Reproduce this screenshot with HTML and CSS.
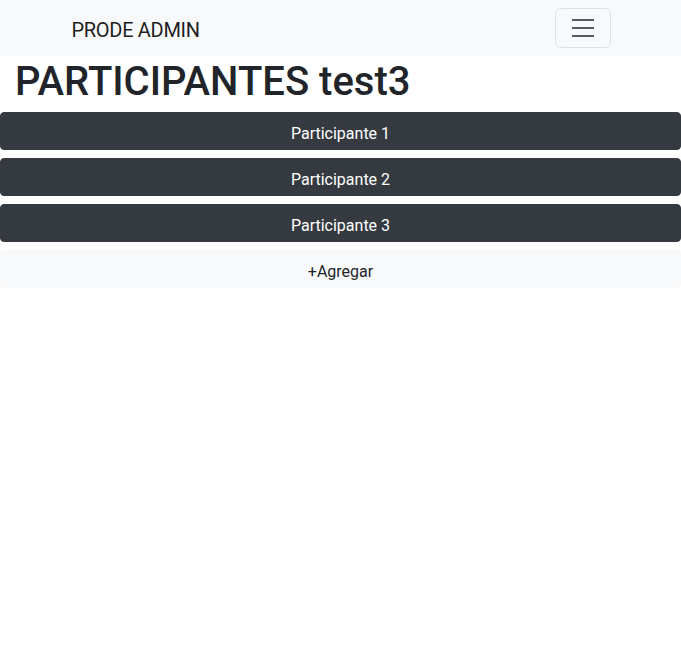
FILE: index.html
```html
<!DOCTYPE html>
<html lang="es">
<head>
<meta charset="utf-8">
<title>PRODE ADMIN</title>
<link rel="stylesheet" href="styles.css">
</head>
<body>
<nav class="navbar">
  <div class="nav-container">
    <a class="brand" href="#">PRODE ADMIN</a>
    <button class="toggler" type="button" aria-label="Toggle navigation">
      <svg width="30" height="30" viewBox="0 0 30 30"><path d="M4 7h22M4 15h22M4 23h22" stroke="rgba(33,37,41,0.75)" stroke-width="2" stroke-linecap="butt" stroke-miterlimit="10"/></svg>
    </button>
  </div>
</nav>
<h1 class="title">PARTICIPANTES test3</h1>
<div class="list">
  <button class="btn btn-dark">Participante 1</button>
  <button class="btn btn-dark">Participante 2</button>
  <button class="btn btn-dark">Participante 3</button>
  <button class="btn btn-light">+Agregar</button>
</div>
</body>
</html>
```
FILE: styles.css
```css
* { box-sizing: border-box; }
body {
  margin: 0;
  font-family: Roboto, "Liberation Sans", sans-serif;
  font-size: 16px;
  line-height: 1.5;
  color: #212529;
  background: #fff;
}
.navbar {
  background: #f8f9fa;
  height: 56px;
  padding: 8px 0;
}
.nav-container {
  width: 540px;
  margin: 0 auto;
  display: flex;
  align-items: center;
  justify-content: space-between;
  height: 40px;
}
.brand {
  font-size: 20px;
  line-height: 30px;
  letter-spacing: -0.3px;
  color: rgba(0,0,0,0.9);
  text-decoration: none;
  padding: 7px 0 3px 1px;
}
.toggler {
  width: 56px;
  height: 40px;
  padding: 0;
  border: 1px solid rgba(0,0,0,0.1);
  border-radius: 6px;
  background: transparent;
  display: flex;
  align-items: center;
  justify-content: center;
}
.toggler svg { display: block; }
.title {
  margin: 0 0 6.5px;
  padding: 1.5px 0 0 15px;
  font-size: 40px;
  font-weight: 500;
  line-height: 48px;
}
.list {
  display: flex;
  flex-direction: column;
  gap: 8px;
}
.btn {
  display: block;
  width: 100%;
  height: 38px;
  border: 1px solid transparent;
  border-radius: 4px;
  font-family: inherit;
  font-size: 16px;
  line-height: 24px;
  padding: 8.5px 12px 3.5px;
  text-align: center;
}
.btn-dark {
  background: #343a40;
  border-color: #343a40;
  color: #fff;
}
.btn-light {
  background: #f8f9fa;
  border-color: #f8f9fa;
  color: #212529;
}
```
